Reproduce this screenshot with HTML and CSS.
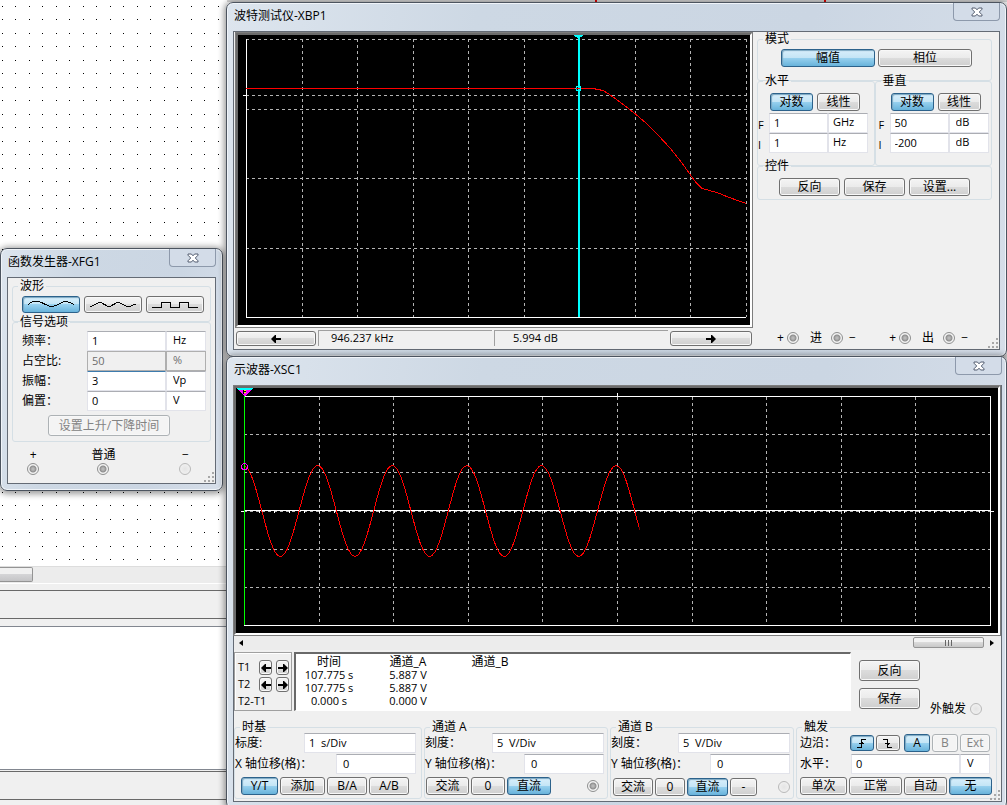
FILE: index.html
```html
<!DOCTYPE html>
<html lang="zh-CN">
<head>
<meta charset="utf-8">
<meta name="viewport" content="width=device-width, initial-scale=1">
<title>XBP1 / XSC1 / XFG1</title>
<link rel="stylesheet" href="styles.css">
</head>
<body>
<svg class="defs" width="0" height="0" aria-hidden="true">
  <symbol id="close" viewBox="0 0 12 10"><path d="M1 1h3.4L6 2.8 7.6 1H11v1.2L8.3 5 11 7.8V9H7.6L6 7.2 4.4 9H1V7.800L3.700 5 1 2.200z" fill="#fff" stroke="#535d70" stroke-width="1"/></symbol>
  <symbol id="left" viewBox="0 0 10 8"><path d="M0 4 4 0h1v3h5v2H5v3H4z" fill="#000"/></symbol>
  <symbol id="right" viewBox="0 0 10 8"><path d="M10 4 6 0H5v3H0v2h5v3h1z" fill="#000"/></symbol>
  <symbol id="grip" viewBox="0 0 11 11"><path d="M8 0h2v2H8zM4 4h2v2H4zM8 4h2v2H8zM0 8h2v2H0zM4 8h2v2H4zM8 8h2v2H8z" fill="#a7a7a7"/></symbol>
</svg>
<main class="desktop">
  <div class="workspace">
    <div class="canvas">
      <svg width="100%" height="100%" aria-hidden="true">
        <defs><pattern id="dots" width="27" height="27" patternUnits="userSpaceOnUse"><path d="M2 6h1v1H2zM15 6h1v1h-1zM2 19h1v1H2zM15 19h1v1h-1z" fill="#000"/></pattern></defs>
        <rect width="100%" height="100%" fill="url(#dots)"/>
        <path d="M227 0h780v2H227z" fill="#d9d9d9"/>
        <path d="M595 0h2v2h-2zM824 0h2v2h-2z" fill="#e00000"/>
      </svg>
    </div>
    <div class="hscroll"><span class="hscroll-thumb"></span></div>
    <div class="tabstrip"></div>
    <div class="sheet"></div>
    <div class="status"></div>
  </div>

  <section class="window xfg" aria-labelledby="t-xfg">
    <header class="titlebar"><h2 id="t-xfg">函数发生器-XFG1</h2><button class="close" aria-label="关闭"><svg width="12" height="10"><use href="#close"/></svg></button></header>
    <div class="client xfg-client">
      <fieldset class="group wave">
        <legend>波形</legend>
        <div class="wave-buttons">
          <button class="btn on" aria-label="正弦波"><svg width="46" height="10" viewBox="0 0 46 10"><path d="M0 4.500C4 1 8 .5 11 1.500 16 3 19 6.500 24 6.500S33 1.500 37 1.500 43 3 46 4.500"/></svg></button>
          <button class="btn" aria-label="三角波"><svg width="46" height="10" viewBox="0 0 46 10"><path d="M0 7 10 2 19 7 28 2 38 7 46 4"/></svg></button>
          <button class="btn" aria-label="方波"><svg width="46" height="10" viewBox="0 0 46 10"><path d="M0 7.500H9.500V2.500H18.500V7.500H27.500V2.500H36.500V7.500H46"/></svg></button>
        </div>
      </fieldset>
      <fieldset class="group signal">
        <legend>信号选项</legend>
        <div class="signal-fields">
          <label for="freq">频率：</label><input id="freq" value="1"><input class="unit" aria-label="频率单位" value="Hz">
          <label for="duty">占空比:</label><input id="duty" value="50" disabled><input class="unit" aria-label="占空比单位" value="%" disabled>
          <label for="amp">振幅：</label><input id="amp" class="focus" value="3"><input class="unit" aria-label="振幅单位" value="Vp">
          <label for="offs">偏置：</label><input id="offs" value="0"><input class="unit" aria-label="偏置单位" value="V">
        </div>
        <button class="btn edge-time" disabled>设置上升/下降时间</button>
      </fieldset>
      <div class="xfg-ports">
        <label class="port-col">+<input type="radio" name="fg" class="port live"></label>
        <label class="port-col">普通<input type="radio" name="fg" class="port live"></label>
        <label class="port-col">−<input type="radio" name="fg" class="port"></label>
      </div>
      <svg class="grip" width="11" height="11" aria-hidden="true"><use href="#grip"/></svg>
    </div>
  </section>

  <section class="window xbp" aria-labelledby="t-xbp">
    <header class="titlebar"><h2 id="t-xbp">波特测试仪-XBP1</h2><button class="close" aria-label="关闭"><svg width="12" height="10"><use href="#close"/></svg></button></header>
    <div class="client xbp-client">
      <div class="bode">
        <div class="screen">
          <svg class="plot" viewBox="0 0 512 290" preserveAspectRatio="none" role="img" aria-label="幅频特性">
            <path class="dash" d="M8 4.500H509M8 60.500H509M8 74.500H509M8 143.500H509M8 213.500H509M64.500 4V282M119.500 4V282M175.500 4V282M230.500 4V282M286.500 4V282M341.500 4V282M397.500 4V282M452.500 4V282M508.500 4V282"/>
            <path class="axis" d="M8.500 4V282.500H508M5 60.500H9"/>
            <rect x="340" y="3" width="1.500" height="279" fill="#0ff"/>
            <path class="trace" d="M8 53.500H355"/>
            <path class="trace" d="M355 53.500 365 55.500 370 58.500 382 67 397.500 79 409 89 420 100 432 113 444 128 452.500 140 458 147.500 464 153.500 479 157.500 490 162 508 168.500"/>
            <path d="M336 0h9v1h-1v1h-2v1h-1v1h-1V3h-1V2h-2V1h-1z" fill="#0ff"/>
            <circle cx="340.500" cy="53.500" r="2.500" fill="none" stroke="#0ff"/>
          </svg>
        </div>
        <div class="readout">
          <button class="btn" aria-label="左移"><svg width="10" height="8"><use href="#left"/></svg></button>
          <output>946.237 kHz</output>
          <output>5.994 dB</output>
          <button class="btn" aria-label="右移"><svg width="10" height="8"><use href="#right"/></svg></button>
        </div>
      </div>
      <div class="bode-controls">
        <fieldset class="group mode"><legend>模式</legend>
          <div class="pair-wide"><button class="btn on">幅值</button><button class="btn">相位</button></div>
        </fieldset>
        <div class="axes">
          <fieldset class="group axis-box"><legend>水平</legend>
            <div class="pair"><button class="btn on">对数</button><button class="btn">线性</button></div>
            <div class="range">
              <label for="hf">F</label><input id="hf" value="1"><input class="unit" aria-label="水平 F 单位" value="GHz">
              <label for="hi">I</label><input id="hi" value="1"><input class="unit" aria-label="水平 I 单位" value="Hz">
            </div>
          </fieldset>
          <fieldset class="group axis-box vertical"><legend>垂直</legend>
            <div class="pair"><button class="btn on">对数</button><button class="btn">线性</button></div>
            <div class="range">
              <label for="vf">F</label><input id="vf" value="50"><input class="unit" aria-label="垂直 F 单位" value="dB">
              <label for="vi">I</label><input id="vi" value="-200"><input class="unit" aria-label="垂直 I 单位" value="dB">
            </div>
          </fieldset>
        </div>
        <fieldset class="group ctl"><legend>控件</legend>
          <div class="triple"><button class="btn">反向</button><button class="btn">保存</button><button class="btn">设置...</button></div>
        </fieldset>
        <div class="bode-ports">
          <div class="port-set"><span>+</span><input type="radio" name="in" class="port live" aria-label="进 +"><span class="port-name">进</span><input type="radio" name="in" class="port live" aria-label="进 −"><span class="minus">−</span></div>
          <div class="port-set"><span>+</span><input type="radio" name="out" class="port live" aria-label="出 +"><span class="port-name">出</span><input type="radio" name="out" class="port live" aria-label="出 −"><span class="minus">−</span></div>
        </div>
      </div>
      <svg class="grip" width="11" height="11" aria-hidden="true"><use href="#grip"/></svg>
    </div>
  </section>

  <section class="window xsc" aria-labelledby="t-xsc">
    <header class="titlebar"><h2 id="t-xsc">示波器-XSC1</h2><button class="close" aria-label="关闭"><svg width="12" height="10"><use href="#close"/></svg></button></header>
    <div class="client xsc-client">
      <div class="screen scope">
        <svg class="plot" viewBox="0 0 762 245" preserveAspectRatio="none" role="img" aria-label="示波器波形">
          <defs>
            <clipPath id="swept"><path d="M8 0H403.500V245H8z"/></clipPath>
            <pattern id="ticks" x="8" y="122" width="15" height="3" patternUnits="userSpaceOnUse"><path d="M0 0h1v3H0z" fill="#fff"/></pattern>
          </defs>
          <path class="dash" d="M8 46.500H754M8 84.500H754M8 123.500H754M8 161.500H754M8 199.500H754M83.500 9V237M157.500 9V237M232.500 9V237M306.500 9V237M381.500 9V237M456.500 9V237M530.500 9V237M605.500 9V237M679.500 9V237"/>
          <path class="axis" d="M8 8.500H754.500V237.500H8M8 122.500H755M5 123.500H9M381.500 5V9M754.500 123.500H758"/>
          <rect x="8" y="122" width="747" height="3" fill="url(#ticks)"/>
          <path class="trace" clip-path="url(#swept)" d="M7.300 77.500C20.900 77.500 30.800 168.500 44.400 168.500S68.100 77.500 81.700 77.500 105.400 168.500 119 168.500 142.700 77.500 156.300 77.500 180 168.500 193.600 168.500 217.300 77.500 230.900 77.500 254.600 168.500 268.200 168.500 291.900 77.500 305.500 77.500 329.200 168.500 342.800 168.500 366.500 77.500 380.100 77.500 403.800 168.500 417.400 168.500"/>
          <path d="M8.500 8V237" stroke="#0f0"/>
          <path d="M0 0H17L15 2H2z" fill="#0ff"/><path d="M2 2H15L9 8H8z" fill="#f0f"/>
          <path d="M8 2h2v1H8zM8 4h2v1H8z" fill="#ff0"/><path d="M7 2h1v4H7zM8 3h2v1H8z" fill="#000"/>
          <circle cx="8.500" cy="78.500" r="3" fill="none" stroke="#f0f"/>
        </svg>
      </div>
      <div class="scrollbar">
        <button class="arrow" aria-label="向左滚动"><svg width="4" height="6"><path d="M4 0v6L0 3z"/></svg></button>
        <span class="thumb"><svg width="8" height="6"><path d="M0 0h1v6H0zM3 0h1v6H3zM6 0h1v6H6z"/></svg></span>
        <button class="arrow" aria-label="向右滚动"><svg width="4" height="6"><path d="M0 0v6l4-3z"/></svg></button>
      </div>
      <div class="measure">
        <div class="cursors">
          <span>T1</span><button class="btn mini" aria-label="T1 左移"><svg width="10" height="8"><use href="#left"/></svg></button><button class="btn mini" aria-label="T1 右移"><svg width="10" height="8"><use href="#right"/></svg></button>
          <span>T2</span><button class="btn mini" aria-label="T2 左移"><svg width="10" height="8"><use href="#left"/></svg></button><button class="btn mini" aria-label="T2 右移"><svg width="10" height="8"><use href="#right"/></svg></button>
          <span class="delta">T2-T1</span>
        </div>
        <div class="readings">
          <table>
            <colgroup><col class="c-time"><col class="c-a"><col class="c-b"></colgroup>
            <thead><tr><th>时间</th><th>通道_A</th><th>通道_B</th></tr></thead>
            <tbody>
              <tr><td>107.775 s</td><td>5.887 V</td><td></td></tr>
              <tr><td>107.775 s</td><td>5.887 V</td><td></td></tr>
              <tr><td>0.000 s</td><td>0.000 V</td><td></td></tr>
            </tbody>
          </table>
        </div>
        <div class="actions">
          <div class="action-buttons"><button class="btn">反向</button><button class="btn">保存</button></div>
          <label class="ext">外触发<input type="radio" class="port"></label>
        </div>
      </div>
      <div class="settings">
        <fieldset class="group timebase"><legend>时基</legend>
          <div class="row"><label for="tb">标度:</label><input id="tb" class="scale" value="1  s/Div"></div>
          <div class="row"><label for="xp">X 轴位移(格)：</label><input id="xp" class="pos" value="0"></div>
          <div class="row buttons tb-buttons"><button class="btn on">Y/T</button><button class="btn">添加</button><button class="btn">B/A</button><button class="btn">A/B</button></div>
        </fieldset>
        <fieldset class="group"><legend>通道 A</legend>
          <div class="row"><label for="as">刻度：</label><input id="as" class="scale" value="5  V/Div"></div>
          <div class="row"><label for="ap">Y 轴位移(格)：</label><input id="ap" class="pos" value="0"></div>
          <div class="row buttons ca-buttons"><button class="btn">交流</button><button class="btn">0</button><button class="btn on">直流</button><input type="radio" class="port live" aria-label="通道 A 端子"></div>
        </fieldset>
        <fieldset class="group"><legend>通道 B</legend>
          <div class="row"><label for="bs">刻度：</label><input id="bs" class="scale" value="5  V/Div"></div>
          <div class="row"><label for="bp">Y 轴位移(格)：</label><input id="bp" class="pos" value="0"></div>
          <div class="row buttons cb-buttons"><button class="btn">交流</button><button class="btn">0</button><button class="btn on">直流</button><button class="btn">-</button><input type="radio" class="port" aria-label="通道 B 端子"></div>
        </fieldset>
        <fieldset class="group trigger"><legend>触发</legend>
          <div class="row edge"><span class="caption">边沿：</span>
            <button class="btn on short" aria-label="上升沿"><svg width="12" height="11" viewBox="0 0 12 11"><path d="M1 9.500H5.500V1.500H10M3 5.500H8M4.500 4.500H6.500"/></svg></button>
            <button class="btn short" aria-label="下降沿"><svg width="12" height="11" viewBox="0 0 12 11"><path d="M1 1.500H5.500V9.500H10M3 5.500H8M4.500 6.500H6.500"/></svg></button>
            <button class="btn on src">A</button><button class="btn" disabled>B</button><button class="btn" disabled>Ext</button></div>
          <div class="row level"><label for="tl">水平：</label><input id="tl" value="0"><input class="unit" aria-label="水平单位" value="V"></div>
          <div class="row buttons tr-buttons"><button class="btn">单次</button><button class="btn">正常</button><button class="btn">自动</button><button class="btn on">无</button></div>
        </fieldset>
      </div>
      <svg class="grip" width="11" height="11" aria-hidden="true"><use href="#grip"/></svg>
    </div>
  </section>
</main>
</body>
</html>
```
FILE: styles.css
```css
* { box-sizing: border-box; }
body {
  margin: 0;
  font: 11px/14px "Open Sans", "Noto Sans CJK SC", sans-serif;
  color: #000;
}
button, input { font: inherit; color: inherit; margin: 0; }
.defs { position: absolute; }

.desktop { position: relative; min-height: 100vh; overflow: hidden; }

/* Application behind the instrument windows */
.workspace { min-height: 100vh; display: flex; flex-direction: column; background: #f0f0f0; }
.canvas { height: 566px; background: #fff; }
.canvas svg { display: block; }
.hscroll { height: 18px; background: #ececec; border-top: 1px solid #ddd; border-bottom: 1px solid #fff; }
.hscroll-thumb { display: block; width: 33px; height: 15px; border: 1px solid #949494; border-left: 0; border-radius: 0 2px 2px 0; background: linear-gradient(#f0f0f0 45%, #d4d4d6 50%, #c4c4c6); }
.tabstrip { height: 29px; margin-top: 6px; border: solid #696969; border-width: 1px 0; }
.sheet { height: 144px; margin-top: 7px; background: #fff; border: solid #828790; border-width: 1px 0; }
.status { height: 29px; margin-top: 1px; border: solid #696969; border-width: 1px 0; }

/* Window frame */
.window {
  position: absolute;
  display: flex;
  flex-direction: column;
  padding: 0 6px 6px;
  border: 1px solid #4c545f;
  border-radius: 7px;
  background: linear-gradient(100deg, #dde5ee, #cdd8e4 30%, #cbd6e3 70%, #d6dee9);
  box-shadow: inset 0 0 0 1px #f0f4f9, 0 1px 6px 2px rgba(0, 0, 0, .4);
}
.xfg { left: 0; top: 248px; width: 223px; }
.xbp { left: 226px; right: 0; top: 2px; }
.xsc { left: 226px; right: 0; top: 356px; padding-right: 4px; }
.titlebar { display: flex; justify-content: space-between; align-items: flex-start; height: 28px; }
.titlebar h2 { margin: 0; padding-left: 1px; font-size: 12px; font-weight: 400; line-height: 26px; }
.close {
  width: 47px; height: 18px; padding: 0;
  display: flex; align-items: center; justify-content: center;
  border: 1px solid #8d99ab; border-top: 0; border-radius: 0 0 4px 4px;
  background: #d3dce8;
}
.client { position: relative; border: 1px solid #646b75; background: #f0f0f0; }
.grip { position: absolute; right: 0; bottom: 0; }

/* Shared controls */
.btn {
  display: flex; align-items: center; justify-content: center;
  height: 18px; min-width: 0; padding: 0;
  border: 1px solid #707070; border-radius: 3px;
  background: linear-gradient(#f4f4f4, #ebebeb 48%, #dcdcdc 50%, #cfcfcf);
  box-shadow: inset 0 0 0 1px #f8f8f8;
  font-size: 12px; line-height: 16px; white-space: nowrap;
}
.btn.on {
  border: 1px solid #2c628b;
  background: linear-gradient(#d8effb, #c4e5f6 48%, #98d1ef 50%, #68b3db);
  box-shadow: inset 1px 1px 1px #7ba6c0;
}
.btn:disabled { border-color: #adb2b5; background: #f4f4f4; color: #838383; }
.btn svg path { shape-rendering: crispEdges; }
.wave .btn svg path, .edge svg path { fill: none; stroke: #000; }

input:not([type]) {
  width: 100%; min-width: 0; height: 20px; padding: 0 4px 1px;
  border: 1px solid #e2e3ea; border-top-color: #abadb3; border-radius: 0;
  background: #fff; white-space: pre;
}
input.unit:not([type]) { padding: 0 6px 3px; }
input:not([type]):disabled { background: #f0f0f0; border-color: #afafaf; color: #6d6d6d; }
input.focus:not([type]) { border-top-color: #3d7bad; }

.port {
  appearance: none; flex: none;
  width: 12px; height: 12px; border: 1px solid #b9b9b9; border-radius: 50%;
  background: radial-gradient(#e4e4e4, #f4f4f4);
}
.port.live { border-color: #8e8f8f; background: radial-gradient(circle, #b8b8b8 0 1px, #8f8f8f 3px, #f4f4f4 4px); }

.group { min-width: 0; margin: 0; padding: 0; border: 1px solid #d5dfe5; border-radius: 3px; }
.group legend { height: 16px; margin-left: 5px; padding: 0 2px; font-size: 12px; line-height: 16px; }

/* Function generator */
.xfg-client { padding: 0 4px 8px 4px; }
.wave { height: 44px; }
.wave-buttons { display: grid; grid-template-columns: repeat(3, 1fr); gap: 4px; padding: 2px 6px 0 9px; }
.wave .btn { height: 17px; }
.signal { height: 128px; margin-top: -8px; }
.signal-fields { display: grid; grid-template-columns: 65px 79px 40px; padding: 1px 2px 0 9px; }
.signal-fields label { font-size: 12px; line-height: 20px; }
.edge-time { width: 122px; height: 21px; margin: 4px auto 0 35px; }
.xfg-ports { display: grid; grid-template-columns: 42fr 98fr 58fr; padding-top: 5px; }
.port-col { display: flex; flex-direction: column; align-items: center; gap: 1px; font-size: 12px; line-height: 15px; }
.port-col:last-child { padding-left: 7px; }

/* Plots */
.screen { border: 2px solid #6b6b6b; border-right-color: #fff; border-bottom-color: #fff; outline: 1px solid #7d7d7d; background: #000; }
.plot { display: block; width: 100%; height: 290px; shape-rendering: crispEdges; }
.scope .plot { height: 245px; }
.plot path { stroke-width: 1; }
.dash { fill: none; stroke: #b4b4b4; stroke-dasharray: 3 3; }
.axis { fill: none; stroke: #fff; }
.trace { fill: none; stroke: #f00; }

/* Bode plotter */
.xbp-client { display: grid; grid-template-columns: minmax(0, 1fr) 246px; height: 319px; }
.bode { padding: 1px 1px 0 2px; }
.readout { display: grid; grid-template-columns: 80px 175fr 175fr 82px; gap: 2px; padding-top: 3px; }
.readout .btn { height: 15px; margin-top: 1px; }
.readout output { height: 16px; padding-left: 12px; border: solid #a0a0a0; border-width: 1px 0 0 1px; line-height: 14px; }
.readout output + output { padding-left: 18px; }
.bode-controls { display: flex; flex-direction: column; margin-top: -1px; padding: 0 7px 3px 4px; }
.mode { height: 50px; }
.pair-wide { display: grid; grid-template-columns: 94px 94px; gap: 3px; padding: 2px 0 0 23px; }
.axes { display: grid; grid-template-columns: 1fr 1fr; margin-top: -8px; }
.axis-box { height: 93px; }
.axis-box input.unit:not([type]) { padding-left: 4px; }
.vertical { padding-left: 3px; }
.vertical legend { margin-left: 2px; }
.vertical input.unit:not([type]) { padding-left: 6px; }
.pair { display: grid; grid-template-columns: 43px 43px; gap: 4px; padding: 4px 0 2px 12px; }
.range { display: grid; grid-template-columns: 11px 59px 40px; }
.range label { padding-top: 5px; }
.ctl { height: 42px; margin-top: -8px; }
.triple { display: grid; grid-template-columns: repeat(3, 61px); gap: 4px; padding: 4px 0 0 21px; }
.bode-ports { display: flex; justify-content: space-between; margin-top: auto; padding: 0 24px 0 20px; }
.port-set { display: flex; align-items: center; gap: 3px; font-size: 12px; line-height: 16px; }
.port-name { padding: 0 6px 0 8px; }
.minus { padding-left: 3px; }

/* Oscilloscope */
.xsc-client { padding: 0 1px 2px 0; }
.scrollbar { display: flex; align-items: center; height: 15px; margin-bottom: 2px; background: #ececec; }
.arrow { width: 14px; height: 14px; padding: 0; border: 0; background: none; display: flex; align-items: center; justify-content: center; }
.thumb + .arrow { width: 16px; }
.thumb { display: flex; align-items: center; justify-content: center; width: 71px; height: 11px; margin-left: auto; border: 1px solid #949494; border-radius: 2px; background: linear-gradient(#f2f2f2 45%, #dadada 50%, #c8c8c8); }
.thumb path { fill: #666; }
.measure { display: grid; grid-template-columns: 58px minmax(0, 1fr) 147px; gap: 2px; height: 59px; }
.cursors { display: grid; grid-template-columns: 17px 13px 13px; column-gap: 4px; row-gap: 2px; align-content: start; padding: 7px 0 0 3px; border: 1px solid #a0a0a0; box-shadow: inset 1px 1px #fff; }
.mini { height: 15px; }
.delta { grid-column: 1 / -1; }
.readings { border: 1px solid #fff; border-top: 2px solid #696969; border-left: 2px solid #696969; background: #fff; }
table { border-collapse: collapse; table-layout: fixed; width: 230px; }
.c-time { width: 66px; }
.c-a { width: 92px; }
.c-b { width: 72px; }
th, td { padding: 0; height: 13px; line-height: 13px; text-align: center; font-weight: 400; }
th { height: 14px; font-size: 12px; }
.actions { display: flex; align-items: flex-end; gap: 10px; padding-left: 6px; }
.action-buttons { display: grid; gap: 7px; align-self: flex-start; width: 61px; padding-top: 8px; }
.action-buttons .btn { height: 21px; }
.ext { display: flex; align-items: center; gap: 4px; height: 18px; font-size: 12px; margin-bottom: -7px; }

.settings { display: grid; grid-template-columns: 188fr 184fr 184fr 201fr; gap: 2px; margin-top: 8px; padding-right: 3px; }
.settings .group { height: 80px; }
.row { display: flex; align-items: center; justify-content: space-between; height: 20px; margin-right: 3px; }
.timebase .row { margin-right: 5px; }
.settings legend { margin-bottom: -2px; }
.row label, .caption { font-size: 12px; white-space: nowrap; }
.row + .row { margin-top: 1px; }
.row input.scale { width: 112px; }
.row input.pos { width: 80px; padding-left: 6px; }
.row.buttons { display: grid; gap: 2px; height: 24px; margin-top: 0; }
.tb-buttons { grid-template-columns: 37px 45px 40px 40px; justify-content: start; padding-left: 6px; }
.ca-buttons { grid-template-columns: 43px 34px 44px 1fr; padding-left: 1px; }
.cb-buttons { grid-template-columns: 40px 30px 41px 27px 1fr; padding: 2px 0 0 2px; }
.buttons .port { justify-self: end; margin-right: 5px; }
.cb-buttons .port { margin-right: 0; }
.trigger .row { margin-left: 3px; margin-right: 4px; }
.trigger .edge, .trigger .level { margin-right: 6px; }
.edge { display: grid; grid-template-columns: 1fr 24px 24px 28px 26px 30px; gap: 2px; }
.edge .short { height: 16px; }
.edge .src { margin-left: 2px; }
.level { display: grid; grid-template-columns: 51px 1fr 30px; }
.tr-buttons { grid-template-columns: 47fr 52fr 43fr 43fr; }
```
